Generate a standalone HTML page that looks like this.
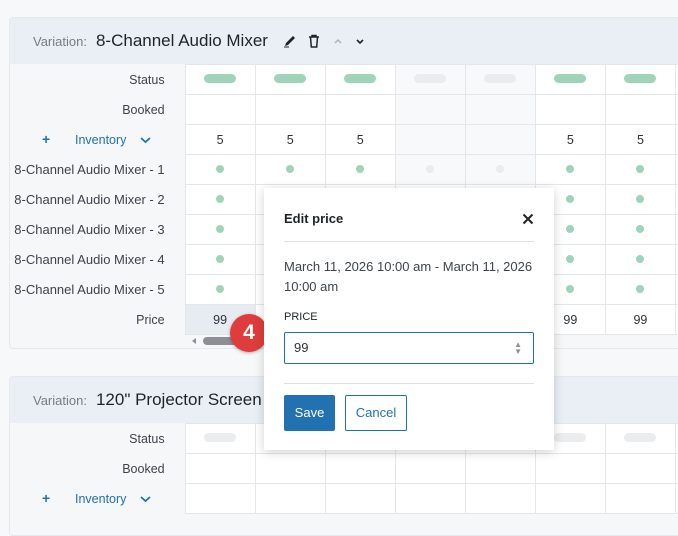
<!DOCTYPE html>
<html><head><meta charset="utf-8"><style>
*{box-sizing:border-box;margin:0;padding:0}
body{width:678px;height:518px;overflow:hidden;background:#f7f8f9;font-family:"Liberation Sans",sans-serif;color:#2c3338;position:relative}
.card{position:absolute;left:9px;width:700px;background:#f6f7f9;border:1px solid #e6e8ec;border-radius:4px;overflow:hidden}
.hd{height:46px;background:#eaeff6;display:flex;align-items:center;padding-left:23px}
.hd .v{font-size:13px;color:#787c82;margin-right:9px}
.hd .t{font-size:17px;color:#1d2327}
table{border-collapse:collapse;table-layout:fixed;width:736px}
td{height:30px;font-size:12.5px;text-align:center;border:1px solid #e4e6ea;background:#fff;padding:0}
td.l{width:175px;text-align:right;padding-right:20px;background:#f6f7f9;border:none;color:#3c434a;border-right:1px solid #e4e6ea;white-space:nowrap}
td.c{width:70px}
td.g{background:#f8f9fb}
.pill{display:block;margin:-2px auto 0;width:32px;height:9px;border-radius:5px;background:#9fd4bb}
.pg{background:#ebecee}
.dot{display:block;margin:-2px auto 0;width:8px;height:8px;border-radius:50%;background:#9fd4bb}
.dg{background:#ebecee}
td.inv{color:#2271b1;text-align:left;padding:0;position:relative}
td.p{background:#e7ebf2}
.sm{font-size:13px!important}
</style></head><body>

<div class="card" style="top:17px;height:332px">
<div class="hd"><span class="v">Variation:</span><span class="t">8-Channel Audio Mixer</span>
<svg width="16" height="16" style="margin-left:14px" viewBox="0 0 16 16"><path d="M3 13l1-3 7-7 2 2-7 7z" fill="#1d2327"/><path d="M2 14h5" stroke="#1d2327"/></svg>
<svg width="16" height="16" style="margin-left:8px" viewBox="0 0 16 16" fill="none" stroke="#1d2327" stroke-width="1.5"><path d="M3 4h10M6 4V2.5h4V4M4.5 4l.8 10h5.4l.8-10"/></svg>
<svg width="12" height="12" style="margin-left:10px" viewBox="0 0 12 12" fill="none" stroke="#b0b4b8" stroke-width="1.5"><path d="M3 8l3-3 3 3"/></svg>
<svg width="12" height="12" style="margin-left:10px" viewBox="0 0 12 12" fill="none" stroke="#1d2327" stroke-width="1.6"><path d="M3 5l3 3 3-3"/></svg>
</div>
<table>
<tr><td class="l">Status</td><td class="c"><span class="pill"></span></td><td class="c"><span class="pill"></span></td><td class="c"><span class="pill"></span></td><td class="c g"><span class="pill pg"></span></td><td class="c g"><span class="pill pg"></span></td><td class="c"><span class="pill"></span></td><td class="c"><span class="pill"></span></td><td class="c"></td></tr>
<tr><td class="l">Booked</td><td class="c"></td><td class="c"></td><td class="c"></td><td class="c g"></td><td class="c g"></td><td class="c"></td><td class="c"></td><td class="c"></td></tr>
<tr><td class="l inv"><span style="position:absolute;left:32px;top:6px;font-weight:bold;font-size:14px">+</span><span style="position:absolute;left:65px;top:8px">Inventory</span><svg style="position:absolute;left:130px;top:11px" width="11" height="8" viewBox="0 0 11 8" fill="none" stroke="#2271b1" stroke-width="1.8"><path d="M1 2l4.5 4 4.5-4"/></svg></td><td class="c">5</td><td class="c">5</td><td class="c">5</td><td class="c g"></td><td class="c g"></td><td class="c">5</td><td class="c">5</td><td class="c"></td></tr>
<tr><td class="l sm">8-Channel Audio Mixer - 1</td><td class="c"><span class="dot"></span></td><td class="c"><span class="dot"></span></td><td class="c"><span class="dot"></span></td><td class="c g"><span class="dot dg"></span></td><td class="c g"><span class="dot dg"></span></td><td class="c"><span class="dot"></span></td><td class="c"><span class="dot"></span></td><td class="c"></td></tr>
<tr><td class="l sm">8-Channel Audio Mixer - 2</td><td class="c"><span class="dot"></span></td><td class="c"></td><td class="c"></td><td class="c"></td><td class="c"></td><td class="c"><span class="dot"></span></td><td class="c"><span class="dot"></span></td><td class="c"></td></tr>
<tr><td class="l sm">8-Channel Audio Mixer - 3</td><td class="c"><span class="dot"></span></td><td class="c"></td><td class="c"></td><td class="c"></td><td class="c"></td><td class="c"><span class="dot"></span></td><td class="c"><span class="dot"></span></td><td class="c"></td></tr>
<tr><td class="l sm">8-Channel Audio Mixer - 4</td><td class="c"><span class="dot"></span></td><td class="c"></td><td class="c"></td><td class="c"></td><td class="c"></td><td class="c"><span class="dot"></span></td><td class="c"><span class="dot"></span></td><td class="c"></td></tr>
<tr><td class="l sm">8-Channel Audio Mixer - 5</td><td class="c"><span class="dot"></span></td><td class="c"></td><td class="c"></td><td class="c"></td><td class="c"></td><td class="c"><span class="dot"></span></td><td class="c"><span class="dot"></span></td><td class="c"></td></tr>
<tr><td class="l">Price</td><td class="c p">99</td><td class="c"></td><td class="c"></td><td class="c"></td><td class="c"></td><td class="c">99</td><td class="c">99</td><td class="c"></td></tr>
</table>
<div style="position:absolute;left:182px;top:320px;width:0;height:0;border:3px solid transparent;border-right:4px solid #8c8f94;border-left:0"></div>
<div style="position:absolute;left:193px;top:319px;width:50px;height:8px;border-radius:4px;background:#8c8f94"></div>
</div>

<div class="card" style="top:376px;height:160px">
<div class="hd"><span class="v">Variation:</span><span class="t">120" Projector Screen</span></div>
<table>
<tr><td class="l">Status</td><td class="c"><span class="pill pg"></span></td><td class="c"><span class="pill pg"></span></td><td class="c"><span class="pill pg"></span></td><td class="c"><span class="pill pg"></span></td><td class="c"><span class="pill pg"></span></td><td class="c"><span class="pill pg"></span></td><td class="c"><span class="pill pg"></span></td><td class="c"></td></tr>
<tr><td class="l">Booked</td><td class="c"></td><td class="c"></td><td class="c"></td><td class="c"></td><td class="c"></td><td class="c"></td><td class="c"></td><td class="c"></td></tr>
<tr><td class="l inv"><span style="position:absolute;left:32px;top:6px;font-weight:bold;font-size:14px">+</span><span style="position:absolute;left:65px;top:8px">Inventory</span><svg style="position:absolute;left:130px;top:11px" width="11" height="8" viewBox="0 0 11 8" fill="none" stroke="#2271b1" stroke-width="1.8"><path d="M1 2l4.5 4 4.5-4"/></svg></td><td class="c"></td><td class="c"></td><td class="c"></td><td class="c"></td><td class="c"></td><td class="c"></td><td class="c"></td><td class="c"></td></tr>
</table>
</div>

<div style="position:absolute;left:230px;top:314px;width:38px;height:38px;border-radius:50%;background:#e03c3c;color:#fff;font-weight:bold;font-size:21px;text-align:center;line-height:38px;box-shadow:0 1px 3px rgba(0,0,0,.3)">4</div>

<div style="position:absolute;left:264px;top:188px;width:290px;height:262px;background:#fff;box-shadow:0 2px 10px rgba(0,0,0,.18);padding:0 20px">
<div style="height:54px;padding-top:8px;border-bottom:1px solid #e0e0e0;display:flex;align-items:center;justify-content:space-between;font-weight:bold;font-size:13px;color:#1d2327">Edit price<svg width="12" height="12" viewBox="0 0 12 12" stroke="#1d2327" stroke-width="2"><path d="M1.5 1.5l9 9M10.5 1.5l-9 9"/></svg></div>
<div style="font-size:13px;line-height:20px;margin-top:15px;color:#3c434a">March 11, 2026 10:00 am - March 11, 2026 10:00 am</div>
<div style="font-size:11px;margin-top:14px;color:#1d2327">PRICE</div>
<div style="margin-top:9px;height:32px;border:1px solid #2271b1;border-radius:2px;font-size:13px;padding-left:9px;line-height:30px;position:relative">99<span style="position:absolute;right:11px;top:0;font-size:8px;color:#8c8f94;line-height:7px;padding-top:8px">▲<br>▼</span></div>
<div style="border-top:1px solid #e0e0e0;margin-top:19px;padding-top:11px;display:flex">
<div style="width:51px;height:36px;background:#2271b1;color:#fff;font-size:13px;text-align:center;line-height:36px;border-radius:2px">Save</div>
<div style="margin-left:10px;width:62px;height:36px;border:1px solid #2271b1;color:#2271b1;font-size:13px;text-align:center;line-height:34px;border-radius:2px">Cancel</div>
</div>
</div>
</body></html>
